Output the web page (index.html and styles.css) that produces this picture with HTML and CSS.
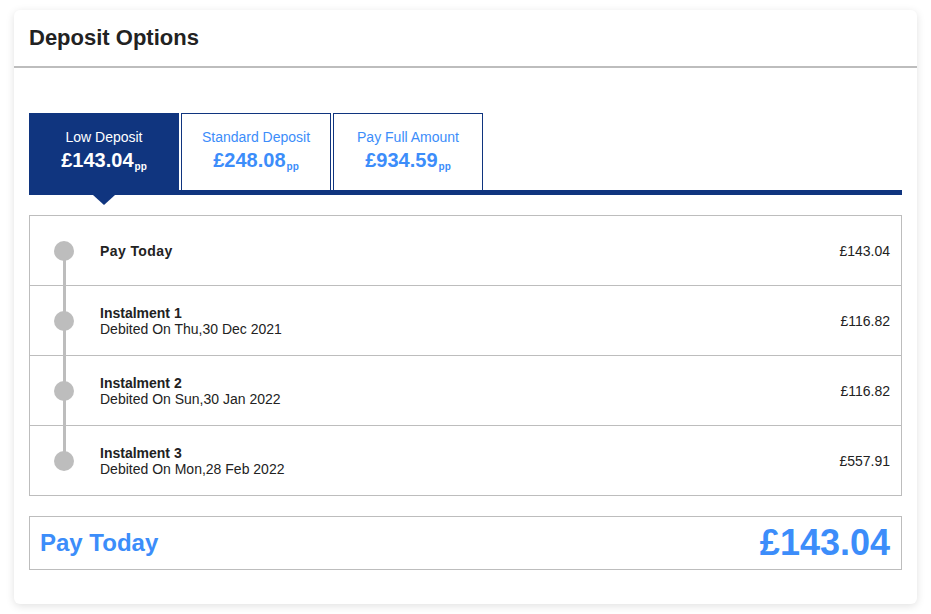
FILE: index.html
```html
<!DOCTYPE html>
<html lang="en">
<head>
  <meta charset="UTF-8" />
  <meta name="viewport" content="width=device-width, initial-scale=1.0"/>
  <title>Deposit Options</title>
  <link rel="stylesheet" href="styles.css">
</head>
<body>

<div class="card">
  <div class="card-header">
    <h2>Deposit Options</h2>
  </div>
  <div class="card-body">
    <div class="tabs">
      <div class="tab active">
        <div class="tab-label">Low Deposit</div>
        <div class="tab-price">£143.04<sub>pp</sub></div>
      </div>
      <div class="tab">
        <div class="tab-label">Standard Deposit</div>
        <div class="tab-price">£248.08<sub>pp</sub></div>
      </div>
      <div class="tab">
        <div class="tab-label">Pay Full Amount</div>
        <div class="tab-price">£934.59<sub>pp</sub></div>
      </div>
    </div>

    <div class="schedule">
      <div class="row">
        <span class="dot"></span>
        <div class="info">
          <div class="title today">Pay Today</div>
        </div>
        <div class="amount">£143.04</div>
      </div>
      <div class="row">
        <span class="dot"></span>
        <div class="info">
          <div class="title">Instalment 1</div>
          <div class="date">Debited On Thu,30 Dec 2021</div>
        </div>
        <div class="amount">£116.82</div>
      </div>
      <div class="row">
        <span class="dot"></span>
        <div class="info">
          <div class="title">Instalment 2</div>
          <div class="date">Debited On Sun,30 Jan 2022</div>
        </div>
        <div class="amount">£116.82</div>
      </div>
      <div class="row">
        <span class="dot"></span>
        <div class="info">
          <div class="title">Instalment 3</div>
          <div class="date">Debited On Mon,28 Feb 2022</div>
        </div>
        <div class="amount">£557.91</div>
      </div>
    </div>

    <div class="total">
      <span class="total-label">Pay Today</span>
      <span class="total-amount">£143.04</span>
    </div>
  </div>
</div>

</body>
</html>
```

FILE: styles.css
```css
body {
  font-family: 'Liberation Sans', Arial, sans-serif;
  margin: 0;
  padding: 10px 14px;
  background: #fff;
  color: #222;
}
.card {
  background: white;
  border-radius: 6px;
  box-shadow: 0 2px 8px rgba(0,0,0,0.12);
  height: 594px;
  box-sizing: border-box;
}
.card-header {
  height: 56px;
  display: flex;
  align-items: center;
  padding: 0 15px;
  border-bottom: 2px solid #bdbdbd;
}
h2 {
  margin: 0;
  font-size: 22px;
  font-weight: bold;
  color: #222;
}
.card-body {
  padding: 45px 15px 0;
}
.tabs {
  display: flex;
  gap: 2px;
  border-bottom: 5px solid #10357f;
}
.tab {
  width: 150px;
  height: 77px;
  box-sizing: border-box;
  border: 1px solid #10357f;
  border-bottom: none;
  text-align: center;
  color: #3c8dfa;
  padding-top: 15px;
  position: relative;
}
.tab.active {
  background: #10357f;
  color: #fff;
}
.tab.active::after {
  content: "";
  position: absolute;
  left: 63px;
  bottom: -15px;
  border-left: 11px solid transparent;
  border-right: 11px solid transparent;
  border-top: 10px solid #10357f;
}
.tab-label {
  font-size: 14px;
  line-height: 16px;
}
.tab-price {
  font-size: 20px;
  font-weight: bold;
  line-height: 26px;
  margin-top: 2px;
}
.tab-price sub {
  font-size: 10px;
  vertical-align: -3px;
  margin-left: 1px;
}
.schedule {
  margin-top: 20px;
  border: 1px solid #bdbdbd;
}
.row {
  display: flex;
  align-items: center;
  height: 70px;
  box-sizing: border-box;
  padding: 0 11px 0 24px;
  border-bottom: 1px solid #bdbdbd;
}
.row:last-child {
  border-bottom: none;
  height: 69px;
}
.dot {
  width: 20px;
  height: 20px;
  border-radius: 50%;
  background: #bdbdbd;
  flex-shrink: 0;
  position: relative;
}
.row:not(:last-child) .dot::after {
  content: "";
  position: absolute;
  left: 9px;
  top: 10px;
  width: 3px;
  height: 70px;
  background: #bdbdbd;
}
.info {
  flex: 1;
  margin-left: 26px;
  font-size: 14px;
  line-height: 16px;
}
.title {
  font-weight: bold;
}
.title.today {
  letter-spacing: 0.4px;
}
.amount {
  font-size: 14px;
}
.total {
  margin-top: 20px;
  height: 54px;
  box-sizing: border-box;
  border: 1px solid #bdbdbd;
  display: flex;
  align-items: center;
  justify-content: space-between;
  padding: 0 11px 0 10px;
  color: #3c8dfa;
  font-weight: bold;
}
.total-label {
  font-size: 24px;
}
.total-amount {
  font-size: 36px;
}
```
